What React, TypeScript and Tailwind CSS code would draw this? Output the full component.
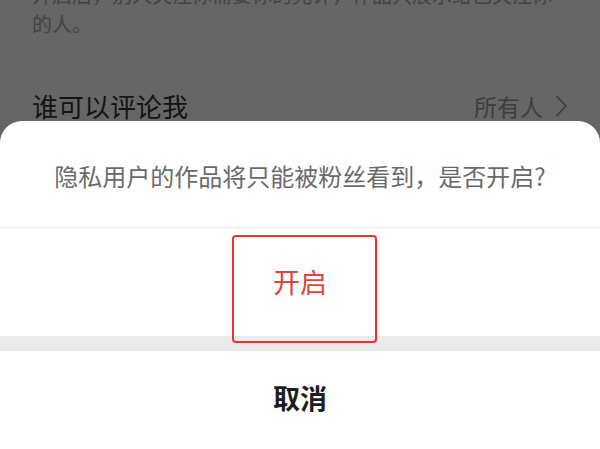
import React from "react";

export default function App() {
  const font = { fontFamily: '"Noto Sans CJK SC", "Noto Sans", sans-serif' };
  return (
    <div className="relative w-[600px] h-[449px] overflow-hidden bg-white" style={font}>
      {/* underlying page */}
      <div className="flex flex-col">
        <div className="-mt-[20px] px-[32px] text-[20px] leading-[29px] text-[#a8a8a8]">
          开启后，别人关注你需要你的允许，作品只展示给已关注你的人。
        </div>
        <div className="mt-[51px] flex items-center justify-between pl-[32px] pr-[32px]">
          <span className="text-[26px] leading-[30px] text-[#333]">谁可以评论我</span>
          <span className="flex items-center gap-[12px] text-[23px] text-[#9a9a9a]">
            所有人
            <svg width="13" height="24" viewBox="0 0 13 24" fill="none">
              <polyline points="1.5,2 11,12 1.5,22" stroke="#9a9a9a" strokeWidth="1.8" />
            </svg>
          </span>
        </div>
      </div>

      {/* dim overlay */}
      <div className="absolute inset-0 bg-black/60" />

      {/* action sheet */}
      <div className="absolute left-0 right-0 bottom-0 h-[328px] flex flex-col bg-white rounded-t-[22px]">
        <div className="h-[106px] flex items-center justify-center pt-[4px] text-[24px] text-[#6a6a6a]">
          隐私用户的作品将只能被粉丝看到，是否开启?
        </div>
        <div className="h-px bg-[#ececec]" />
        <div className="h-[108px] flex items-center justify-center text-[27px] text-[#e0443c]">
          开启
        </div>
        <div className="h-[15px] bg-[#ebebeb]" />
        <div className="flex-1 flex items-center justify-center pb-[4px] text-[27px] font-bold text-[#1e1e1e]">
          取消
        </div>
      </div>

      {/* red annotation box */}
      <div className="absolute left-[232px] top-[235px] w-[145px] h-[108px] border-2 border-[#e8332f] rounded-[4px]" />
    </div>
  );
}
